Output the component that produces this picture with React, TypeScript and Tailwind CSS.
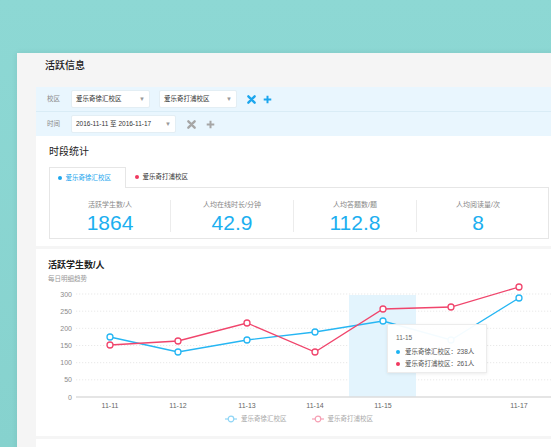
import { ReactNode } from 'react';

const font = "font-['Liberation_Sans','Noto_Sans_CJK_SC',sans-serif]";

const xs = [110, 178, 247, 315, 383, 451, 519];
const blue = [338, 353, 341, 333, 322, 341, 299];
const red = [346, 342, 324, 353, 310, 308, 288];
const yTicks = [300, 250, 200, 150, 100, 50, 0];
const xLabels = ['11-11', '11-12', '11-13', '11-14', '11-15', '', '11-17'];

const toY = (v: number) => 398 - v * 0.3433;

function Caret() {
  return <span className="ml-auto text-[6px] leading-none text-[#999]">▼</span>;
}

function Select({ width, children }: { width: string; children: ReactNode }) {
  return (
    <div className={`${width} flex h-[18px] items-center rounded-[2px] border border-[#e3eef4] bg-white pl-[4px] pr-[4px] text-[6.5px] text-[#333]`}>
      <span>{children}</span>
      <Caret />
    </div>
  );
}

function Cross({ color }: { color: string }) {
  return (
    <svg width="9" height="9" viewBox="0 0 10 10">
      <path d="M1.5 1.5 L8.5 8.5 M8.5 1.5 L1.5 8.5" stroke={color} strokeWidth="2.6" strokeLinecap="round" />
    </svg>
  );
}

function PlusIcon({ color }: { color: string }) {
  return (
    <svg width="9" height="9" viewBox="0 0 10 10">
      <path d="M5 0.8 V9.2 M0.8 5 H9.2" stroke={color} strokeWidth="2.2" />
    </svg>
  );
}

const metrics = [
  { label: '活跃学生数/人', value: '1864' },
  { label: '人均在线时长/分钟', value: '42.9' },
  { label: '人均答题数/题', value: '112.8' },
  { label: '人均阅读量/次', value: '8' },
];

function Chart() {
  const line = (ys: number[]) => xs.map((x, i) => `${x},${ys[i]}`).join(' ');
  return (
    <div className="relative h-[128px] w-[515px]">
      <svg width="515" height="128" viewBox="36 284 515 128" className="block">
        {yTicks.map((t) => (
          <g key={t}>
            <text x="72" y={toY(t) + 2.5} textAnchor="end" fontSize="7" fill="#8a8a8a">
              {t}
            </text>
            {t > 0 && (
              <line x1="76" x2="551" y1={toY(t)} y2={toY(t)} stroke="#e3e3e3" strokeWidth="0.8" strokeDasharray="1.2 1.8" />
            )}
          </g>
        ))}
        <rect x="349" y="296" width="67" height="102" fill="#e3f4fd" />
        <line x1="76" x2="551" y1="398" y2="398" stroke="#dcdcdc" strokeWidth="1.4" />
        {xLabels.map((l, i) =>
          l ? (
            <text key={i} x={xs[i]} y="409" textAnchor="middle" fontSize="7" fill="#666">
              {l}
            </text>
          ) : null
        )}
        <polyline points={line(blue)} fill="none" stroke="#26b6f3" strokeWidth="1.3" />
        <polyline points={line(red)} fill="none" stroke="#f0456c" strokeWidth="1.3" />
        {xs.map((x, i) => (
          <circle key={`b${i}`} cx={x} cy={blue[i]} r="3" fill="#fff" stroke="#26b6f3" strokeWidth="1.3" />
        ))}
        {xs.map((x, i) => (
          <circle key={`r${i}`} cx={x} cy={red[i]} r="3" fill="#fff" stroke="#f0456c" strokeWidth="1.3" />
        ))}
      </svg>
      <div className="absolute left-[351px] top-[41px] h-[49px] w-[100px] border border-[#ececec] bg-white/95 px-[8px] pt-[8px] text-[6.5px] text-[#555] shadow-[0_1px_3px_rgba(0,0,0,0.08)]">
        <div className="leading-[10px] text-[#666]">11-15</div>
        <div className="mt-[4px] flex items-center leading-[10px]">
          <span className="mr-[5px] h-[4px] w-[4px] rounded-full bg-[#1ab3f3]" />
          爱乐奇徐汇校区：238人
        </div>
        <div className="mt-[2px] flex items-center leading-[10px]">
          <span className="mr-[5px] h-[4px] w-[4px] rounded-full bg-[#f0385f]" />
          爱乐奇打浦校区：261人
        </div>
      </div>
    </div>
  );
}

function LegendIcon({ color }: { color: string }) {
  return (
    <svg width="12" height="8" viewBox="0 0 12 8">
      <line x1="0" x2="12" y1="4" y2="4" stroke={color} strokeWidth="1.2" />
      <circle cx="6" cy="4" r="2.8" fill="#fff" stroke={color} strokeWidth="1.2" />
    </svg>
  );
}

export default function App() {
  return (
    <div className={`${font} h-[447px] w-[551px] overflow-hidden bg-gradient-to-b from-[#8dd8d4] to-[#86d2ce] pl-[17px] pt-[53px]`}>
      <div className="w-[560px] bg-[#f5f5f5] shadow-[0_0_6px_rgba(0,0,0,0.08)]">
        <div className="h-[34px] pl-[28px] pt-[7px]">
          <h1 className="text-[10px] font-medium leading-[12px] text-[#222]">活跃信息</h1>
        </div>

        <div className="ml-[19px]">
          <div className="bg-[#e9f6fe]">
            <div className="flex h-[25px] items-center border-b border-[#d9ecf6]">
              <div className="w-[35px] text-center text-[6.5px] text-[#8a8a8a]">校区</div>
              <Select width="w-[79px]">爱乐奇徐汇校区</Select>
              <div className="ml-[9px]">
                <Select width="w-[78px]">爱乐奇打浦校区</Select>
              </div>
              <div className="ml-[10px] flex items-center gap-[7px]">
                <Cross color="#1ba6ee" />
                <PlusIcon color="#1ba6ee" />
              </div>
            </div>
            <div className="flex h-[24px] items-center">
              <div className="w-[35px] text-center text-[6.5px] text-[#8a8a8a]">时间</div>
              <Select width="w-[105px]">2016-11-11 至 2016-11-17</Select>
              <div className="ml-[11px] flex items-center gap-[10px]">
                <Cross color="#a6a6a6" />
                <PlusIcon color="#a6a6a6" />
              </div>
            </div>
          </div>

          <section className="h-[110px] bg-white pl-[13px] pt-[10px]">
            <h2 className="text-[10px] leading-[12px] text-[#222]">时段统计</h2>
            <div className="mt-[9px] flex h-[20px] items-stretch">
              <div className="relative z-10 -mb-px flex w-[77px] items-center border border-b-0 border-[#e6e6e6] bg-white pl-[8px] text-[6.5px] text-[#1ba6ee]">
                <span className="mr-[4px] h-[3.5px] w-[3.5px] rounded-full bg-[#1ba6ee]" />
                爱乐奇徐汇校区
              </div>
              <div className="flex items-center pl-[9px] text-[6.5px] text-[#333]">
                <span className="mr-[4px] h-[3.5px] w-[3.5px] rounded-full bg-[#f0385f]" />
                爱乐奇打浦校区
              </div>
            </div>
            <div className="grid h-[52px] w-[500px] grid-cols-[120px_123px_123px_123px] border border-[#e6e6e6] pt-[12px]">
              {metrics.map((m, i) => (
                <div
                  key={m.label}
                  className={`flex h-[32px] flex-col items-center ${i > 0 ? 'border-l border-[#ececec]' : ''}`}
                >
                  <div className="text-[7px] leading-[9px] text-[#888]">{m.label}</div>
                  <div className="mt-[3px] text-[21px] leading-[22px] text-[#1caff0]">{m.value}</div>
                </div>
              ))}
            </div>
          </section>

          <section className="mt-[3px] h-[187px] bg-white">
            <div className="h-[34px] pl-[12px] pt-[10px]">
              <h3 className="text-[9px] font-bold leading-[12px] text-[#222]">活跃学生数/人</h3>
              <div className="mt-[3px] text-[6.5px] leading-[9px] text-[#999]">每日明细趋势</div>
            </div>
            <Chart />
            <div className="mt-[3px] flex h-[10px] items-center pl-[189px] text-[6.5px] text-[#aaa]">
              <LegendIcon color="#8fd5f6" />
              <span className="ml-[4px]">爱乐奇徐汇校区</span>
              <span className="ml-[25px]">
                <LegendIcon color="#f5a0b4" />
              </span>
              <span className="ml-[4px]">爱乐奇打浦校区</span>
            </div>
          </section>

          <div className="mt-[3px] h-[20px] bg-white" />
        </div>
      </div>
    </div>
  );
}
